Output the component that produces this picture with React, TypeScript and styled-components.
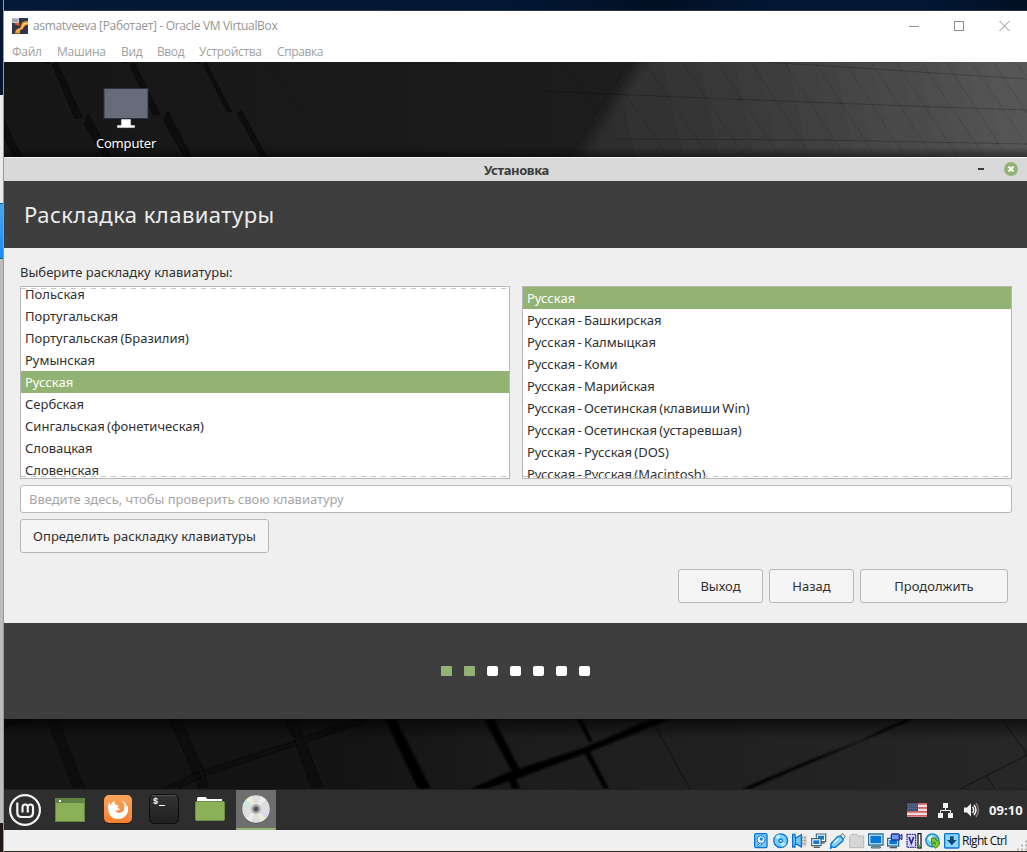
import React from "react";
import styled, { createGlobalStyle } from "styled-components";

const Global = createGlobalStyle`
  * { box-sizing: border-box; }
  html, body { margin: 0; padding: 0; background: #020f24; }
  body { width: 1027px; height: 852px; overflow: hidden; }
`;

const ui = `"Noto Sans", "Open Sans", sans-serif`;
const win = `"Open Sans", "Noto Sans", sans-serif`;

const Screen = styled.div`
  display: grid;
  grid-template-columns: 4px 1fr;
  width: 1027px;
  height: 852px;
  background: linear-gradient(90deg, #021a37, #021733 50%, #020f24 64%, #021733 75%, #021733 90%, #020f24);
  overflow: hidden;
`;

const Behind = styled.div`
  display: grid;
  grid-template-rows: 95px 108px 56px 564px 29px;
  border-right: 1px solid #98989a;
`;
const Strip = styled.div<{ $bg: string; $edge?: string }>`
  background: ${(p) => p.$bg};
  ${(p) => p.$edge && `border-top: 1px solid ${p.$edge}; border-bottom: 1px solid ${p.$edge};`}
`;

const Window = styled.div`
  display: flex;
  flex-direction: column;
  margin-top: 10px;
  border-top: 1px solid #2b3448;
  border-bottom: 1px solid #2c2826;
  background: #fff;
  min-width: 0;
`;

const TitleBar = styled.div`
  display: flex;
  align-items: center;
  height: 29px;
  padding: 0 17px 0 8px;
  font: 12px/16px ${win};
  color: #959595;
`;
const AppTitle = styled.span`
  flex: 1;
  margin-left: 5px;
  letter-spacing: -0.33px;
  white-space: nowrap;
`;
const Controls = styled.div`
  display: flex;
  gap: 35px;
  svg { display: block; }
`;

const MenuBar = styled.div`
  display: flex;
  gap: 16px;
  height: 22px;
  padding: 4px 0 0 8px;
  font: 12px/16px ${win};
  color: #a0a0a0;
`;
const MenuItem = styled.span<{ $w: number; $ls: number }>`
  width: ${(p) => p.$w}px;
  letter-spacing: ${(p) => p.$ls}px;
  white-space: nowrap;
`;

const Desktop = styled.div<{ $h: number; $bg: string }>`
  position: relative;
  flex: none;
  height: ${(p) => p.$h}px;
  background: ${(p) => p.$bg};
  overflow: hidden;
`;
const Wallpaper = styled.svg`
  position: absolute;
  inset: 0;
`;
const DesktopIcon = styled.div`
  position: absolute;
  left: 86px;
  top: 25px;
  width: 72px;
  display: flex;
  flex-direction: column;
  align-items: center;
  font: 13px/18px ${ui};
  letter-spacing: -0.18px;
  color: #fff;
  text-shadow: 1px 1px 1px #000;
`;

const InstallerTitle = styled.div`
  display: grid;
  grid-template-columns: 1fr 100px;
  height: 24px;
  padding-left: 3px;
  border-top: 1px solid #f6f6f6;
  background: #d9d9d9;
  color: #3c3c3c;
`;
const InstallerName = styled.div`
  padding-left: 99px;
  padding-top: 3px;
  text-align: center;
  font: bold 13px/18px ${ui};
  letter-spacing: -0.4px;
`;
const Header = styled.div`
  height: 67px;
  padding: 17px 0 0 20px;
  background: #3e3e3e;
  color: #ececec;
  font: 22px/32px ${ui};
  letter-spacing: 0.45px;
`;
const Content = styled.div`
  display: flex;
  flex-direction: column;
  height: 375px;
  padding: 15px 15px 0 16px;
  background: #efefef;
  color: #303030;
  font: 13px/18px ${ui};
`;
const Label = styled.label`
  height: 23px;
  letter-spacing: 0.02px;
`;
const Lists = styled.div`
  display: grid;
  grid-template-columns: 1fr 1fr;
  gap: 12px;
`;
const ListBox = styled.div`
  position: relative;
  height: 193px;
  border: 1px solid #b8b8b8;
  background: #fff;
  overflow: hidden;
`;
const Rows = styled.div<{ $up: number }>`
  margin-top: -${(p) => p.$up}px;
  word-spacing: -1.1px;
`;
const Row = styled.div<{ $on: boolean }>`
  height: 22px;
  padding: 2px 4px;
  white-space: nowrap;
  background: ${(p) => (p.$on ? "#93b374" : "transparent")};
  color: ${(p) => (p.$on ? "#fff" : "#303030")};
`;
const Dashes = styled.div<{ $edge: "top" | "bottom" }>`
  position: absolute;
  left: 0;
  right: 0;
  ${(p) => p.$edge}: 1px;
  height: 1px;
  background: repeating-linear-gradient(90deg, #c6c6c6 0 5px, transparent 5px 10px);
`;
const Entry = styled.div`
  height: 28px;
  margin-top: 6px;
  padding: 4px 8px;
  border: 1px solid #b8b8b8;
  border-radius: 3px;
  background: #fff;
  color: #a6a6a6;
  letter-spacing: -0.03px;
`;
const Button = styled.button<{ $w: number }>`
  width: ${(p) => p.$w}px;
  height: 34px;
  padding: 0 0 1px;
  border: 1px solid #b8b8b8;
  border-radius: 3px;
  background: #f5f5f5;
  color: #303030;
  font: 13px/18px ${ui};
`;
const Detect = styled.div`
  margin-top: 6px;
  height: 34px;
`;
const Actions = styled.div`
  display: flex;
  justify-content: flex-end;
  gap: 6px;
  margin-top: 16px;
  padding-right: 4px;
`;
const Footer = styled.div`
  display: flex;
  gap: 12px;
  height: 96px;
  padding: 43px 0 0 437px;
  background: #3e3e3e;
`;
const Dot = styled.i<{ $done: boolean }>`
  width: 11px;
  height: 10px;
  border-radius: ${(p) => (p.$done ? 1 : 2)}px;
  background: ${(p) => (p.$done ? "#93b374" : "#fff")};
`;

const Panel = styled.div`
  display: flex;
  align-items: stretch;
  height: 41px;
  border-top: 1px solid #202020;
  background: #2e2e2e;
  svg { display: block; }
`;
const Launcher = styled.div<{ $w: number; $active?: boolean }>`
  display: flex;
  justify-content: center;
  width: ${(p) => p.$w}px;
  background: ${(p) => (p.$active ? "#6e6e6e" : "transparent")};
  border-bottom: ${(p) => (p.$active ? "2px solid #93b374" : "0")};
`;
const Tray = styled.div`
  display: flex;
  flex: 1;
  justify-content: flex-end;
  padding-right: 3px;
`;
const Clock = styled.div`
  width: 35px;
  margin-left: 9px;
  padding-top: 11px;
  color: #f2f2f2;
  font: bold 13px/18px ${ui};
  letter-spacing: 0.1px;
  white-space: nowrap;
`;

const StatusBar = styled.div`
  display: flex;
  justify-content: flex-end;
  height: 21px;
  padding: 3px 0 0;
  background: #f0f0f0;
  svg { display: block; }
`;
const StatusIcons = styled.div`
  display: flex;
  gap: 3px;
`;
const HostKey = styled.div`
  width: 55px;
  margin-left: 2px;
  color: #111;
  font: 12px/16px ${win};
  letter-spacing: -0.68px;
  white-space: nowrap;
`;

const layouts = ["Польская", "Португальская", "Португальская (Бразилия)", "Румынская", "Русская", "Сербская", "Сингальская (фонетическая)", "Словацкая", "Словенская"];
const variants = ["Русская", "Русская - Башкирская", "Русская - Калмыцкая", "Русская - Коми", "Русская - Марийская", "Русская - Осетинская (клавиши Win)", "Русская - Осетинская (устаревшая)", "Русская - Русская (DOS)", "Русская - Русская (Macintosh)"];
const menus: [string, number, number][] = [["Файл", 29, -0.3], ["Машина", 48, -0.2], ["Вид", 20, -0.3], ["Ввод", 26, -0.4], ["Устройства", 62, -0.33], ["Справка", 46, -0.4]];

const BoxLogo = () => (
  <svg width="16" height="16" viewBox="0 0 16 16">
    <rect width="16" height="16" fill="#2e3546" />
    <path d="M3 15.500Q3 10.500 8 10L10 5Q11 3.200 16 3V7Q12.500 7 12 9Q11 12 8 12.500V15.500Z" fill="#f3982a" />
    <path d="M5 14Q5 11.800 9 11L11.500 5.500 15.500 4.500V5.500Q11.500 6 11 8.500Q10 11.500 7 12Z" fill="#ffdf8a" />
    <path d="M2 6 7 8 8 6 5 4Z" fill="#e2571e" />
    <rect width="7" height="5" fill="#c9c9cd" />
    <path d="M1 1V4M3 1V4M5 1V4" stroke="#777b86" strokeWidth=".8" />
  </svg>
);

const TopWallpaper = () => (
  <Wallpaper width="1023" height="95" viewBox="4 62 1023 95">
    <defs>
      <linearGradient id="lit" x1="570" y1="157" x2="1027" y2="62" gradientUnits="userSpaceOnUse">
        <stop offset="0" stopColor="#2a2a2a" />
        <stop offset=".45" stopColor="#3c3c3c" />
        <stop offset="1" stopColor="#585858" />
      </linearGradient>
      <linearGradient id="fall" x1="0" y1="147" x2="0" y2="157" gradientUnits="userSpaceOnUse">
        <stop offset="0" stopColor="#000" stopOpacity="0" />
        <stop offset="1" stopColor="#000" stopOpacity=".45" />
      </linearGradient>
      <linearGradient id="dim" x1="4" y1="0" x2="640" y2="0" gradientUnits="userSpaceOnUse">
        <stop offset="0" stopColor="#161616" />
        <stop offset="1" stopColor="#1d1d1d" />
      </linearGradient>
      <filter id="softTop" x="-10%" y="-30%" width="120%" height="160%"><feGaussianBlur stdDeviation="6" /></filter>
      <filter id="edgeTop"><feGaussianBlur stdDeviation=".7" /></filter>
    </defs>
    <rect x="4" y="62" width="1023" height="95" fill="url(#dim)" />
    <path d="M570 172 654 42H1060V172Z" fill="url(#lit)" filter="url(#softTop)" />
    <g fill="#080808" filter="url(#edgeTop)">
      <path d="M52 65 57 62 83 118 75 119Z" />
      <path d="M130 66 134 62 160 114 153 115Z" />
      <path d="M203 64 206 62 232 112 227 112Z" />
      <path d="M84 124 88 113 112 157H103Z" />
      <path d="M163 120 168 111 192 157H184Z" />
      <path d="M237 114 241 109 267 157H261Z" />
      <path d="M4 120 22 157H14L4 138Z" />
      <path d="M44 62H51L47 64.500ZM122 62H128L125 64ZM195 62H201L198 64Z" />
    </g>
    <g fill="none" stroke="#000" strokeOpacity=".13" strokeWidth="1">
      <path d="M270 65 331 157M518 62 535 88M563 62 613 137M604 62 668 157M644 62 710 157M682 62 745 157M717 62 780 157M751 62 812 157M784 62 845 157M815 62 876 157M845 62 905 157M871 62 933 157M896 62 958 157M921 62 985 157M946 62 1007 157M971 62 1027 145M993 62 1027 113M1015 62 1027 77" />
    </g>
    <g fill="none" stroke="#000" strokeOpacity=".22" strokeWidth="1">
      <path d="M540 91 680 97 935 107 1027 110M618 139 820 140 1027 144M765 62 905 71 1027 79" />
    </g>
    <rect x="4" y="147" width="1023" height="10" fill="url(#fall)" />
  </Wallpaper>
);

const BottomWallpaper = () => (
  <Wallpaper width="1023" height="70" viewBox="4 719 1023 70">
    <defs>
      <linearGradient id="floor" x1="4" y1="0" x2="1027" y2="0" gradientUnits="userSpaceOnUse">
        <stop offset="0" stopColor="#131313" />
        <stop offset=".35" stopColor="#141414" />
        <stop offset=".5" stopColor="#1c1c1c" />
        <stop offset="1" stopColor="#272727" />
      </linearGradient>
      <linearGradient id="shade" x1="0" y1="719" x2="0" y2="739" gradientUnits="userSpaceOnUse">
        <stop offset="0" stopColor="#000" stopOpacity=".6" />
        <stop offset="1" stopColor="#000" stopOpacity="0" />
      </linearGradient>
      <filter id="edgeLow"><feGaussianBlur stdDeviation="1" /></filter>
    </defs>
    <rect x="4" y="719" width="1023" height="70" fill="url(#floor)" />
    <g fill="#070707" filter="url(#edgeLow)">
      <path d="M48 719H57L84 789H74Z" />
      <path d="M170 719H180L204 772 208 789H200Z" />
      <path d="M284 719H296L304 739 323 789H312L296 742Z" />
      <path d="M162 789 202 771 302 739 340 724 366 719V722L302 743 202 776 178 789Z" />
      <path d="M4 724 20 719H32L4 727Z" />
    </g>
    <g fill="#060606" filter="url(#edgeLow)">
      <path d="M385 719H396L431 789H418Z" />
      <path d="M484 719H494L520 770H511ZM508 776 514 774 520 789H512Z" />
      <path d="M577 719H582L593 742H589ZM583 750 588 748 609 789H604Z" />
      <path d="M470 789 511 771 583 748 651 719H671L589 752 514 780 485 789Z" />
      <path d="M741 789 808 761 857 742 905 719H914L857 743 808 764 750 789Z" />
    </g>
    <path d="M654 724 690 789M960 789 1027 755M1003 720 1027 755M986 776 995 789" fill="none" stroke="#0e0e0e" strokeWidth=".8" />
    <rect x="4" y="719" width="1023" height="20" fill="url(#shade)" />
  </Wallpaper>
);

const blue = "#0874d2";
const statusArt: React.ReactNode[] = [
  <><rect x="2" y="2" width="37" height="42" rx="4" fill="#7cc8f5" stroke={blue} strokeWidth="4" /><circle cx="21" cy="20" r="12" fill="#fff" stroke={blue} strokeWidth="3" /><circle cx="22" cy="18" r="5" fill="#1887de" /><path d="M10 37 20 29 24 34 14 40Z" fill="#fff" stroke={blue} strokeWidth="3" /></>,
  <><circle cx="23" cy="23" r="20.500" fill="#79d2fa" stroke={blue} strokeWidth="4" /><path d="M23 23 6 12Q12 5 20 4ZM23 23 40 34Q34 41 26 42Z" fill="#bdeeff" /><circle cx="23" cy="23" r="5" fill="#fff" stroke={blue} strokeWidth="4" /></>,
  <><path d="M22 8H44V40H22Z" fill="#cfcfcf" /><path d="M28 14H44M28 23H44M28 32H44" stroke="#999" strokeWidth="4" strokeDasharray="5 3" /><path d="M2 4H9V13H16L28 5V42L16 34H9V42H2Z" fill="#72c9f8" stroke={blue} strokeWidth="4" /><path d="M11 14V33" stroke="#1b5f9d" strokeWidth="3" /></>,
  <><path d="M16 3H44V26H16Z" fill="#fff" stroke="#3b627e" strokeWidth="3.500" /><rect x="21" y="8" width="18" height="12" fill="#0c7bd1" /><path d="M27 30H41" stroke="#555" strokeWidth="4" /><path d="M2 17H30V38H2Z" fill="#fff" stroke="#3b627e" strokeWidth="3.500" /><rect x="7" y="22" width="18" height="11" fill="#0c7bd1" /><path d="M8 43H26" stroke="#555" strokeWidth="4" /></>,
  <><path d="M30 10 37 2 46 10 39 19Z" fill="#eee" stroke="#666" strokeWidth="3" /><path d="M4 31 23 11Q28 7 34 12L38 16Q41 20 37 25L20 40Q13 45 7 42L2 46 1 42 4 38Q1 35 4 31Z" fill="#85d0fa" stroke={blue} strokeWidth="4" /><path d="M12 29 25 17" stroke="#e8faff" strokeWidth="5" /></>,
  <path d="M2 44V11L9 4H23L27 9H44V44Z" fill="#d6d6d6" stroke="#b8b8b8" strokeWidth="3" />,
  <><path d="M2 3H45V36H2Z" fill="#fff" stroke="#2c6f9c" strokeWidth="4" /><rect x="7" y="8" width="33" height="23" fill="#0578d9" /><path d="M10 41H37V45H10Z" fill="#a9c5d3" stroke="#466673" strokeWidth="3" /></>,
  <><path d="M2 16H35V39H2Z" fill="#fff" stroke="#2c6f9c" strokeWidth="4" /><rect x="7" y="21" width="24" height="13" fill="#0578d9" /><path d="M8 44H30" stroke="#555" strokeWidth="4" /><rect x="13" y="3" width="24" height="18" rx="3" fill="#6c9fe9" stroke="#2d2d9d" strokeWidth="4" /><path d="M37 9 45 4V20L37 15Z" fill="#6c9fe9" stroke="#2d2d9d" strokeWidth="3" /></>,
  <><rect x="3" y="4" width="26" height="39" fill="#d6d6ff" stroke="#34328f" strokeWidth="4" strokeDasharray="5 2" /><path d="M9 12 16 31 23 12" fill="none" stroke="#2b2991" strokeWidth="5" /><rect x="36" y="2" width="9" height="43" fill="#fff" stroke="#000" strokeWidth="3.500" /><rect x="38" y="35" width="5" height="8" fill="#1fdc0c" /></>,
  <><circle cx="22" cy="22" r="19.500" fill="#78cdf4" stroke="#1785c2" strokeWidth="4" /><path d="M8 14 20 6 25 15 14 27Z" fill="#d5f3ff" /><path d="M20 15H34L32 21Q48 22 42 37L33 46 20 37 25 31 31 34Q34 28 26 28L19 31Z" fill="#77ce28" stroke="#327113" strokeWidth="2.500" /></>,
  <><rect x="2" y="2" width="43" height="43" rx="3" fill="#8bd6fc" stroke={blue} strokeWidth="4" /><path d="M18 10H29V21H38L23.500 37 9 21H18Z" fill="#0f4777" /></>,
];

export default function App() {
  return (
    <>
      <Global />
      <Screen>
        <Behind>
          <Strip $bg="#021733" />
          <Strip $bg="#ececec" />
          <Strip $bg="linear-gradient(#4ba5ef,#168bf0)" $edge="#0d62ad" />
          <Strip $bg="#bcbcbc" />
          <Strip $bg="#211a17" />
        </Behind>
        <Window>
          <TitleBar>
            <BoxLogo />
            <AppTitle>asmatveeva [Работает] - Oracle VM VirtualBox</AppTitle>
            <Controls>
              <svg width="10" height="10"><path d="M0 5.500H10" stroke="#8e8e8e" /></svg>
              <svg width="10" height="10"><rect x=".5" y=".5" width="9" height="9" fill="none" stroke="#8e8e8e" /></svg>
              <svg width="11" height="10"><path d="M.5 0 10.500 10M10.500 0 .5 10" stroke="#8e8e8e" /></svg>
            </Controls>
          </TitleBar>
          <MenuBar>{menus.map(([t, w, ls]) => <MenuItem key={t} $w={w} $ls={ls}>{t}</MenuItem>)}</MenuBar>

          <Desktop $h={95} $bg="#181818">
            <TopWallpaper />
            <DesktopIcon>
              <svg width="48" height="47" viewBox="0 0 48 47">
                <rect x="2" y="1.500" width="44" height="30" fill="#666c7a" stroke="#2c3242" />
                <path d="M19 32H29V38H33V41H15V38H19Z" fill="#fff" stroke="#252a38" strokeWidth=".6" />
              </svg>
              <span>Computer</span>
            </DesktopIcon>
          </Desktop>

          <InstallerTitle>
            <InstallerName>Установка</InstallerName>
            <svg width="100" height="23">
              <rect x="51" y="10" width="6" height="2" fill="#3a3a3a" />
              <circle cx="84" cy="11" r="7" fill="#93b374" />
              <path d="M81.500 8.500 86.500 13.500M86.500 8.500 81.500 13.500" stroke="#fff" strokeWidth="1.800" />
            </svg>
          </InstallerTitle>
          <Header>Раскладка клавиатуры</Header>
          <Content>
            <Label>Выберите раскладку клавиатуры:</Label>
            <Lists>
              <ListBox>
                <Rows $up={4}>{layouts.map((t) => <Row key={t} $on={t === "Русская"}>{t}</Row>)}</Rows>
                <Dashes $edge="top" />
                <Dashes $edge="bottom" />
              </ListBox>
              <ListBox>
                <Rows $up={0}>{variants.map((t) => <Row key={t} $on={t === "Русская"}>{t}</Row>)}</Rows>
                <Dashes $edge="bottom" />
              </ListBox>
            </Lists>
            <Entry>Введите здесь, чтобы проверить свою клавиатуру</Entry>
            <Detect><Button $w={249}>Определить раскладку клавиатуры</Button></Detect>
            <Actions>
              <Button $w={85}>Выход</Button>
              <Button $w={85}>Назад</Button>
              <Button $w={148}>Продолжить</Button>
            </Actions>
          </Content>
          <Footer>{[0, 1, 2, 3, 4, 5, 6].map((i) => <Dot key={i} $done={i < 2} />)}</Footer>

          <Desktop $h={70} $bg="#151515"><BottomWallpaper /></Desktop>

          <Panel>
            <Launcher $w={42}>
              <svg width="34" height="40" viewBox="0 0 34 40">
                <circle cx="17" cy="20" r="14.900" fill="none" stroke="#f2f2f2" strokeWidth="2.200" />
                <path d="M9.300 12.500V22.500Q9.300 27 13.500 27H20.500Q25 27 25 22.500V17.200Q25 14.500 22.400 14.500Q19.800 14.500 19.800 17.200V22.500M19.800 17.200Q19.800 14.500 17.200 14.500Q14.500 14.500 14.500 17.200V22.500" fill="none" stroke="#f2f2f2" strokeWidth="2.200" />
              </svg>
            </Launcher>
            <Launcher $w={48}>
              <svg width="30" height="40">
                <rect x=".5" y="8.500" width="29" height="23" fill="#8bb158" stroke="#638641" />
                <rect x="1" y="8" width="28" height="5" fill="#628242" />
                <rect x="4" y="10" width="2" height="2" fill="#fff" />
              </svg>
            </Launcher>
            <Launcher $w={48}>
              <svg width="30" height="40" viewBox="0 0 30 40">
                <defs><linearGradient id="fox" x1="0" y1="0" x2="0" y2="1"><stop stopColor="#fca55c" /><stop offset="1" stopColor="#f58032" /></linearGradient></defs>
                <rect x="1" y="5" width="28" height="29" rx="5" fill="#24160e" />
                <rect x="1" y="5" width="28" height="28" rx="5" fill="url(#fox)" />
                <path d="M6 12 7.500 15Q9 12 11.500 11Q11 13 12.500 14.500L16 16Q14.500 17 14 18.500Q15.500 18 17 19Q15.500 21 12 20.500Q14 24 18 22.500Q22 21 21 16L22 17Q21.500 13 18.500 10.500Q24 12.500 23.500 17L24.700 15.500Q26 21 23.500 24.800Q20.500 29 15 29Q9.500 29 6.500 24.500Q4 19.500 6 12Z" fill="#fff" />
              </svg>
            </Launcher>
            <Launcher $w={44}>
              <svg width="30" height="40" viewBox="0 0 30 40">
                <defs><linearGradient id="term" x1="0" y1="0" x2="0" y2="1"><stop stopColor="#343434" /><stop offset="1" stopColor="#202020" /></linearGradient></defs>
                <rect x=".5" y="4.500" width="29" height="29" rx="5" fill="url(#term)" stroke="#0e0e0e" />
                <path d="M3 5.500H27" stroke="#555" strokeWidth=".8" />
                <text x="4" y="14" fill="#fff" fontFamily="Liberation Mono, monospace" fontWeight="bold" fontSize="8.500">$</text>
                <path d="M10 15.500H16" stroke="#fff" />
              </svg>
            </Launcher>
            <Launcher $w={48}>
              <svg width="30" height="40">
                <path d="M2 12V9Q2 7 4 7H10Q12 7 12 9H27V13H2Z" fill="#fff" />
                <rect x=".5" y="11.500" width="29" height="19" rx="1" fill="#8bb158" stroke="#6b8d48" />
              </svg>
            </Launcher>
            <Launcher $w={2} />
            <Launcher $w={40} $active>
              <svg width="30" height="38" viewBox="0 0 30 38">
                <circle cx="15" cy="19.500" r="14" fill="#555" />
                <circle cx="15" cy="19" r="13.800" fill="#dedede" />
                <path d="M15 19 5 9.400 10 6Z" fill="#f5ead2" /><path d="M15 19 2 14 5 9.400Z" fill="#c9ecea" />
                <path d="M15 19 25 28.600 20 32Z" fill="#f1ead2" /><path d="M15 19 28 24 25 28.600Z" fill="#d3dbf0" />
                <path d="M15 19 20 6 25 9.500ZM15 19 10 32 5 28.500Z" fill="#ededed" />
                <circle cx="15" cy="19" r="4.800" fill="#a9a9a9" />
                <circle cx="15" cy="19" r="2.500" fill="#555" />
              </svg>
            </Launcher>
            <Tray>
              <svg width="76" height="40" viewBox="904 790 76 40">
                <rect x="907" y="803" width="20" height="14" fill="#f0dede" />
                <path d="M907 803.800H927M907 807.800H927M907 811.800H927M907 815.800H927" stroke="#cf6264" strokeWidth="1.700" />
                <rect x="907" y="803" width="11" height="8" fill="#43507b" />
                <path d="M908 804.500H917M908 806.500H917M908 808.500H917" stroke="#7c86a3" strokeWidth=".7" strokeDasharray="1 1" />
                <path d="M943 803H948V808H943ZM938 813H943V818H938ZM948 813H953V818H948Z" fill="#f2f2f2" />
                <path d="M945.500 808V811M940.500 813V810.500H950.500V813" fill="none" stroke="#f2f2f2" />
                <path d="M964 807.500H967L971 803.500V816.500L967 812.500H964Z" fill="#f2f2f2" />
                <path d="M972.500 807Q975 810 972.500 813M974 805Q978 810 974 815" fill="none" stroke="#f2f2f2" strokeWidth="1.500" />
                <path d="M976 803Q981 810 976 817" fill="none" stroke="#777" strokeWidth="1.500" />
              </svg>
              <Clock>09:10</Clock>
            </Tray>
          </Panel>

          <StatusBar>
            <StatusIcons>
              {statusArt.map((art, i) => <svg key={i} width="16" height="16" viewBox="0 0 48 48">{art}</svg>)}
            </StatusIcons>
            <HostKey>Right Ctrl</HostKey>
            <svg width="10" height="18" viewBox="0 0 10 18">
              <path d="M8 8.500H10M4 12.500H6M8 12.500H10M0 16.500H2M4 16.500H6M8 16.500H10" stroke="#b5b5b5" strokeWidth="2" />
            </svg>
          </StatusBar>
        </Window>
      </Screen>
    </>
  );
}
